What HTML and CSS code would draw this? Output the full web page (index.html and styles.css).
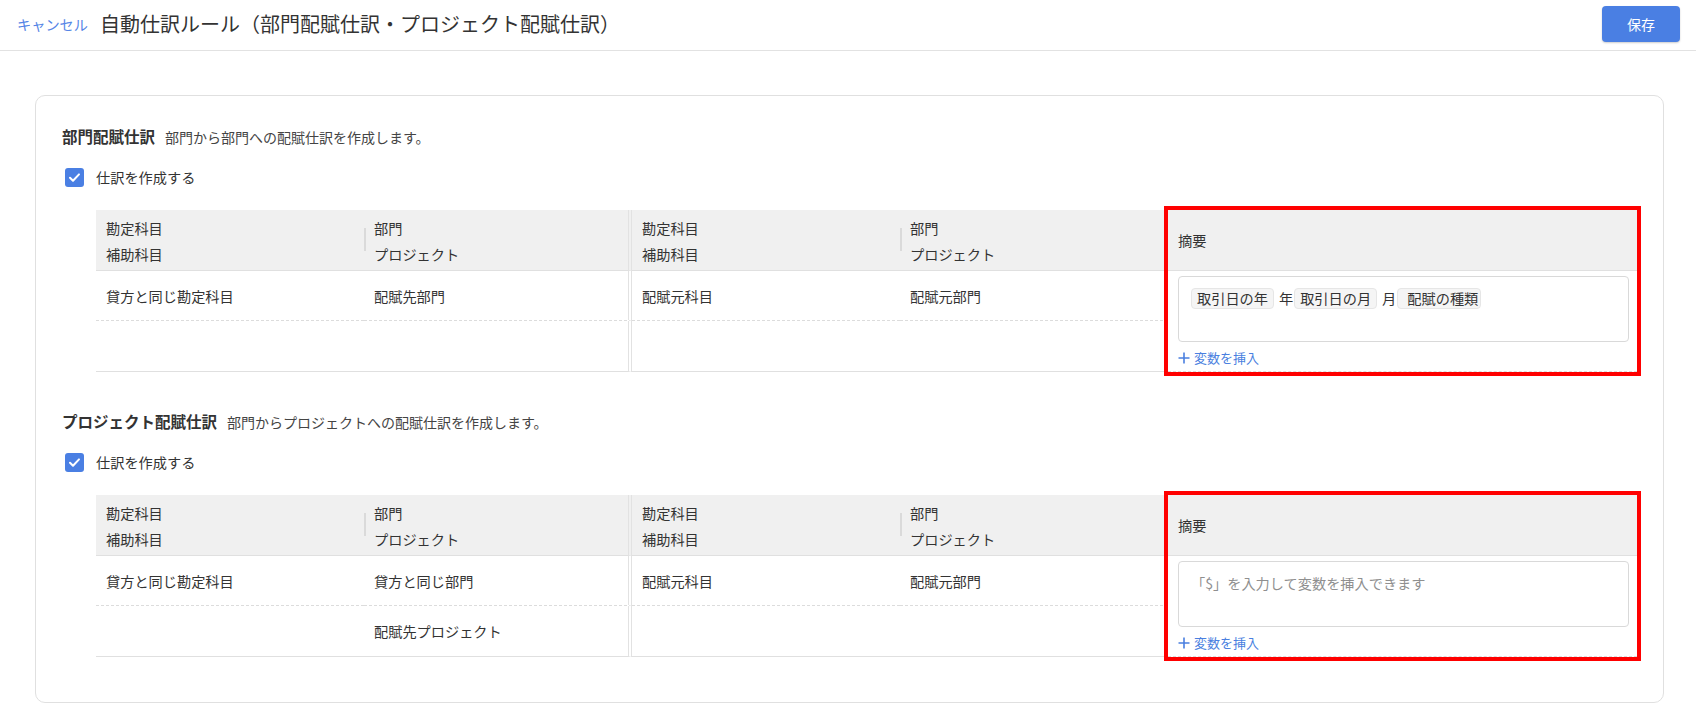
FILE: index.html
```html
<!DOCTYPE html>
<html lang="ja">
<head>
<meta charset="utf-8">
<title>自動仕訳ルール</title>
<link rel="stylesheet" href="styles.css">
</head>
<body>
<header class="topbar">
  <a class="cancel">キャンセル</a>
  <h1 class="title">自動仕訳ルール（部門配賦仕訳・プロジェクト配賦仕訳）</h1>
  <button class="save">保存</button>
</header>
<main class="page">
  <section class="card">
    <div class="rule">
      <div class="rule-head"><span class="rule-title">部門配賦仕訳</span><span class="rule-desc">部門から部門への配賦仕訳を作成します。</span></div>
      <div class="check-row">
        <span class="checkbox"><svg width="19" height="19" viewBox="0 0 19 19"><path d="M5 9.8l3 3 6-6.4" fill="none" stroke="#fff" stroke-width="2" stroke-linecap="round" stroke-linejoin="round"/></svg></span>
        <span class="check-label">仕訳を作成する</span>
      </div>
      <div class="entry">
        <div class="grid">
          <div class="th">勘定科目<br>補助科目</div>
          <div class="th c2 sep">部門<br>プロジェクト</div>
          <div class="th">勘定科目<br>補助科目</div>
          <div class="th sep">部門<br>プロジェクト</div>
          <div class="td">貸方と同じ勘定科目</div>
          <div class="td c2">配賦先部門</div>
          <div class="td">配賦元科目</div>
          <div class="td">配賦元部門</div>
          <div class="td last"></div>
          <div class="td last c2"></div>
          <div class="td last"></div>
          <div class="td last"></div>
        </div>
        <div class="memo">
          <div class="memo-head">摘要</div>
          <div class="memo-body">
            <div class="memo-input">
              <span class="chip">取引日の年</span><span class="lit">年</span><span class="chip">取引日の月</span><span class="lit">月</span><span class="chip chip-wide">配賦の種類</span>
            </div>
            <a class="insert"><svg width="12" height="12" viewBox="0 0 12 12"><path d="M6 0.5v11M0.5 6h11" stroke="#4a7fe0" stroke-width="1.6"/></svg><span>変数を挿入</span></a>
          </div>
        </div>
      </div>
    </div>

    <div class="rule rule-2">
      <div class="rule-head"><span class="rule-title">プロジェクト配賦仕訳</span><span class="rule-desc">部門からプロジェクトへの配賦仕訳を作成します。</span></div>
      <div class="check-row">
        <span class="checkbox"><svg width="19" height="19" viewBox="0 0 19 19"><path d="M5 9.8l3 3 6-6.4" fill="none" stroke="#fff" stroke-width="2" stroke-linecap="round" stroke-linejoin="round"/></svg></span>
        <span class="check-label">仕訳を作成する</span>
      </div>
      <div class="entry">
        <div class="grid">
          <div class="th">勘定科目<br>補助科目</div>
          <div class="th c2 sep">部門<br>プロジェクト</div>
          <div class="th">勘定科目<br>補助科目</div>
          <div class="th sep">部門<br>プロジェクト</div>
          <div class="td">貸方と同じ勘定科目</div>
          <div class="td c2">貸方と同じ部門</div>
          <div class="td">配賦元科目</div>
          <div class="td">配賦元部門</div>
          <div class="td last"></div>
          <div class="td last c2">配賦先プロジェクト</div>
          <div class="td last"></div>
          <div class="td last"></div>
        </div>
        <div class="memo">
          <div class="memo-head">摘要</div>
          <div class="memo-body">
            <div class="memo-input placeholder">「$」を入力して変数を挿入できます</div>
            <a class="insert"><svg width="12" height="12" viewBox="0 0 12 12"><path d="M6 0.5v11M0.5 6h11" stroke="#4a7fe0" stroke-width="1.6"/></svg><span>変数を挿入</span></a>
          </div>
        </div>
      </div>
    </div>
  </section>
</main>
</body>
</html>
```

FILE: styles.css
```css
* { box-sizing: border-box; }

body {
  margin: 0;
  font-family: "Noto Sans CJK JP", "Noto Sans", sans-serif;
  color: #333;
  background: #fff;
  font-size: 14.2px;
}

.topbar {
  display: flex;
  align-items: center;
  height: 51px;
  padding: 0 16px 3px 17px;
  border-bottom: 1px solid #e2e2e2;
}

.cancel {
  font-size: 14.2px;
  color: #5585e6;
  cursor: pointer;
}

.title {
  margin: 0 0 0 12px;
  font-size: 20px;
  font-weight: normal;
  color: #333;
  flex: 1;
}

.save {
  width: 78px;
  height: 36px;
  border: none;
  border-radius: 4px;
  background: #4a7fe3;
  color: #fff;
  font-family: inherit;
  font-size: 14px;
  box-shadow: 0 1px 2px rgba(0, 0, 0, 0.2);
}

.page {
  padding: 44px 32px 0 35px;
}

.card {
  border: 1px solid #e0e0e0;
  border-radius: 10px;
  padding: 29px 26px 45px 26px;
}

.rule-2 {
  margin-top: 38px;
}

.rule-head {
  display: flex;
  align-items: baseline;
  height: 22px;
  line-height: 22px;
}

.rule-title {
  font-size: 15.5px;
  font-weight: bold;
  color: #333;
  line-height: 22px;
}

.rule-desc {
  margin-left: 10px;
  font-size: 14px;
  color: #444;
  line-height: 22px;
}

.check-row {
  display: flex;
  align-items: center;
  margin: 20px 0 0 3px;
  height: 20px;
}

.checkbox {
  width: 19px;
  height: 19px;
  border-radius: 3px;
  background: #4a7fe3;
  display: flex;
}

.check-label {
  margin-left: 12px;
}

.entry {
  display: flex;
  margin: 23px 0 0 34px;
}

.grid {
  display: grid;
  grid-template-columns: repeat(4, 268px);
}

.th {
  height: 61px;
  padding: 5px 10px 3px;
  line-height: 26px;
  background: #f0f0f0;
  border-bottom: 1px solid #e0e0e0;
}

.sep {
  background: linear-gradient(#dadada, #dadada) no-repeat 0 18px / 2px 23px, #f0f0f0;
}

.td {
  height: 50px;
  padding: 0 10px;
  display: flex;
  align-items: center;
  border-bottom: 1px dashed #dcdcdc;
}

.td.last {
  height: 51px;
  border-bottom: 1px solid #e0e0e0;
}

.c2 {
  border-right: 4px double #e2e2e2;
}

.memo {
  flex: 1;
  display: flex;
  flex-direction: column;
  outline: 4px solid #ff0000;
}

.memo-head {
  height: 61px;
  padding: 0 10px;
  display: flex;
  align-items: center;
  background: #f0f0f0;
  border-bottom: 1px solid #e0e0e0;
}

.memo-body {
  flex: 1;
  padding: 5px 8px 4px 10px;
  border-bottom: 1px dashed #dcdcdc;
}

.memo-input {
  min-height: 66px;
  border: 1px solid #d9d9d9;
  border-radius: 4px;
  padding: 11px 12px;
  display: flex;
  align-items: flex-start;
  line-height: 19px;
}

.placeholder {
  color: #8f8f8f;
  line-height: 21px;
}

.chip {
  display: inline-block;
  padding: 0 5px;
  border: 1px solid #e6e6e6;
  border-radius: 4px;
  background: #f5f5f5;
  color: #333;
}

.chip-wide {
  padding: 0 2px 0 9px;
}

.lit {
  margin: 1px 1px 0 5px;
}

.insert {
  display: flex;
  align-items: center;
  gap: 4px;
  margin-top: 7px;
  font-size: 13px;
  line-height: 18px;
  color: #4a7fe0;
  cursor: pointer;
}
```
